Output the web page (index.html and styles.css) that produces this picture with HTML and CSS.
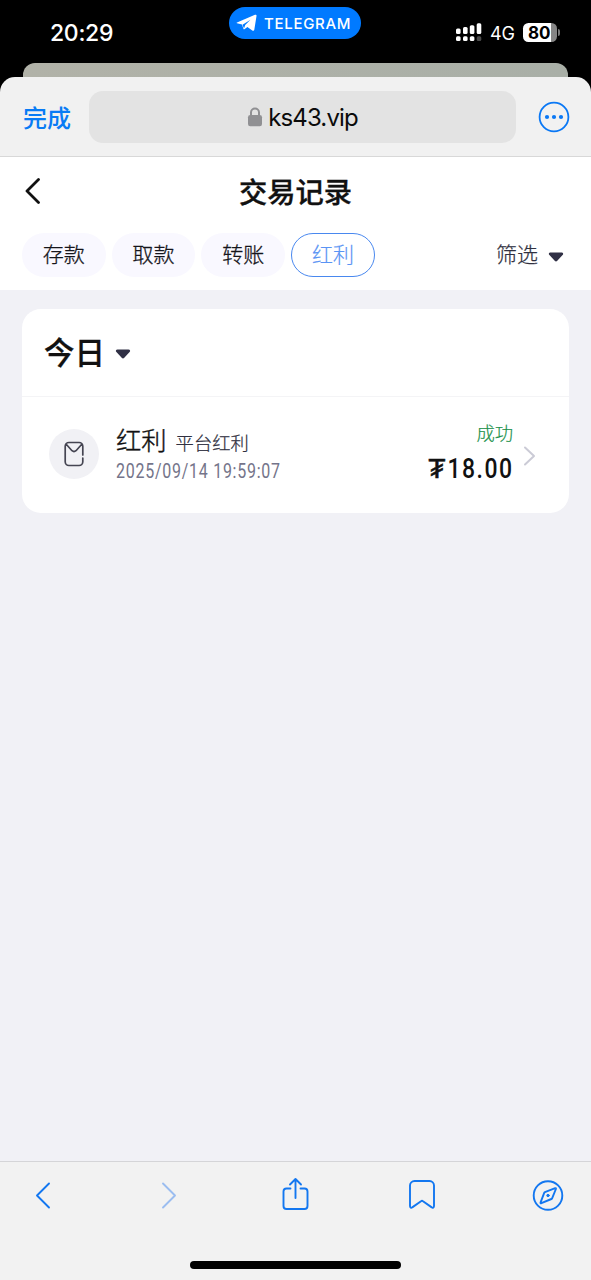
FILE: index.html
```html
<!DOCTYPE html>
<html lang="zh-CN">
<head>
<meta charset="utf-8">
<meta name="viewport" content="width=device-width, initial-scale=1">
<title>交易记录</title>
<link rel="stylesheet" href="styles.css">
</head>
<body>
<div class="screen">
  <header class="status">
    <div class="status-time">20:29</div>
    <div class="status-app">
      <svg width="22" height="18" viewBox="0 0 22 18"><path d="M1 8.400 19 .8c1-.4 1.700.2 1.500 1.300L18.300 15.700c-.2 1.200-1 1.500-2 .8L11.400 13l-3 2.200c-.5.3-.8.100-1-.4L6 10.400 1 9.300c-.6-.2-.6-.7 0-.9Z" fill="#fff"/><path d="M6.500 10.700 14.500 5.800 9.200 10.900 8 14.500Z" fill="#007aff"/></svg>
      <span>TELEGRAM</span>
    </div>
    <div class="status-right">
      <svg width="26" height="20" viewBox="0 0 26 20" fill="#fff"><rect x="0" y="5.500" width="4.600" height="5.600" rx="1.500"/><rect x="7" y="4" width="4.600" height="7.100" rx="1.500"/><rect x="13.800" y="2.200" width="4.600" height="8.900" rx="1.500"/><rect x="20.700" y=".3" width="4.600" height="10.800" rx="1.500"/><rect x="0" y="13.300" width="4.600" height="4.800" rx="1.500"/><rect x="7" y="13.300" width="4.600" height="4.800" rx="1.500"/><rect x="13.800" y="13.300" width="4.600" height="4.800" rx="1.500"/><rect x="20.700" y="13.300" width="4.600" height="4.800" rx="1.500" fill="#4c4c4c"/></svg>
      <span class="network">4G</span>
      <div class="battery"><span>80</span></div>
      <i class="battery-cap"></i>
    </div>
  </header>
  <div class="backdrop"><div class="peek"></div></div>
  <main class="sheet">
    <div class="browser-bar">
      <span class="done">完成</span>
      <div class="address">
        <svg width="16" height="20" viewBox="0 0 16 20"><path d="M4 9V5.500a4 4 0 0 1 8 0V9" fill="none" stroke="#909093" stroke-width="2"/><rect x="1" y="8" width="14" height="11.200" rx="2.300" fill="#909093"/></svg>
        <span>ks43.vip</span>
      </div>
      <svg width="32" height="32" viewBox="0 0 32 32"><circle cx="16" cy="16" r="14.400" fill="none" stroke="#0a78f5" stroke-width="1.800"/><g fill="#0a78f5"><circle cx="9" cy="16" r="2.100"/><circle cx="16" cy="16" r="2.100"/><circle cx="23" cy="16" r="2.100"/></g></svg>
    </div>
    <section class="page-head">
      <div class="title-row">
        <svg width="16" height="26" viewBox="0 0 16 26"><path d="M13.500 1.500 2 13l11.500 11.500" fill="none" stroke="#111" stroke-width="2.800" stroke-linecap="round" stroke-linejoin="round"/></svg>
        <h1>交易记录</h1>
      </div>
      <div class="tabs">
        <span class="tab">存款</span>
        <span class="tab">取款</span>
        <span class="tab">转账</span>
        <span class="tab active">红利</span>
        <div class="filter"><span>筛选</span><svg class="caret" width="16" height="11" viewBox="0 0 16 11"><path d="M2.500.5h11c1.600 0 2.200 1.500 1.100 2.600L9.300 8.800a1.800 1.800 0 0 1-2.600 0L1.400 3.100C.3 2 .9.5 2.500.5Z" fill="#303045"/></svg></div>
      </div>
    </section>
    <section class="content">
      <article class="card">
        <div class="card-head"><h2>今日</h2><svg class="caret" width="16" height="11" viewBox="0 0 16 11"><path d="M2.500.5h11c1.600 0 2.200 1.500 1.100 2.600L9.300 8.800a1.800 1.800 0 0 1-2.600 0L1.400 3.100C.3 2 .9.5 2.500.5Z" fill="#303045"/></svg></div>
        <div class="record">
          <div class="record-icon"><svg width="20" height="26" viewBox="0 0 20 26"><path d="M18.800 14V5.200A3.700 3.700 0 0 0 15.100 1.500H4.900A3.700 3.700 0 0 0 1.200 5.200v15.600a3.700 3.700 0 0 0 3.700 3.700h10.200a3.700 3.700 0 0 0 3.700-3.700V17M2 3l6 6.700q2 1.600 4 0L18 3" fill="none" stroke="#454552" stroke-width="1.700" stroke-linecap="round" stroke-linejoin="round"/></svg></div>
          <div class="record-info">
            <div class="record-name"><span class="kind">红利</span><span class="source">平台红利</span></div>
            <div class="date"><span>2025/09/14 19:59:07</span></div>
          </div>
          <div class="record-result">
            <div class="state">成功</div>
            <div class="amount"><span class="currency">₮</span><span class="value">18.00</span></div>
          </div>
          <svg class="more" width="13" height="20" viewBox="0 0 13 20"><path d="m2 1.500 9 8.500-9 8.500" fill="none" stroke="#cbcbd6" stroke-width="2" stroke-linecap="round" stroke-linejoin="round"/></svg>
        </div>
      </article>
    </section>
    <footer class="toolbar">
      <nav class="tools">
        <svg width="32" height="36" viewBox="0 0 32 36"><path d="M22 6.500 10 18.500l12 12"/></svg>
        <svg class="disabled" width="32" height="36" viewBox="0 0 32 36"><path d="m10 6.500 12 12-12 12"/></svg>
        <svg width="32" height="36" viewBox="0 0 32 36"><path d="M10.500 11.500H6.500a3 3 0 0 0-3 3V29a3 3 0 0 0 3 3h18a3 3 0 0 0 3-3V14.500a3 3 0 0 0-3-3h-4M15.500 21V2.500M10 7.500 15.500 2 21 7.500"/></svg>
        <svg width="32" height="36" viewBox="0 0 32 36"><path d="M8.500 4h15a4.500 4.500 0 0 1 4.500 4.500V29c0 1.700-1.200 2.300-2.600 1.100L17 24.200q-1-.8-2 0l-8.400 5.900C5.200 31.300 4 30.700 4 29V8.500A4.500 4.500 0 0 1 8.500 4Z"/></svg>
        <svg width="32" height="36" viewBox="0 0 32 36"><circle cx="16" cy="18.500" r="14.300"/><path d="M23.200 11.200 12.900 15.200a1.200 1.200 0 0 0-.7.7L8.600 25.400c-.3.800.1 1.100.8.800l10-4.200a1.200 1.200 0 0 0 .7-.7L23.900 12c.2-.7-.1-1-.7-.8Z"/><circle cx="16" cy="18.500" r="1.200" fill="#1377f0" stroke-width="1"/></svg>
      </nav>
      <div class="home"></div>
    </footer>
  </main>
</div>
</body>
</html>
```

FILE: styles.css
```css
* { box-sizing: border-box; }
body { margin: 0; background: #000; font-family: Inter, "Noto Sans CJK SC", sans-serif; }
h1, h2 { margin: 0; }
svg { display: block; flex: none; }
.screen { width: 591px; height: 1280px; display: flex; flex-direction: column; overflow: hidden; background: #000; }
.status { height: 63px; padding: 0 31px 0 50px; display: grid; grid-template-columns: 179px 132px 1fr; color: #fff; }
.status-time { font-size: 23px; font-weight: 500; line-height: 66px; letter-spacing: -.3px; }
.status-app { height: 32px; margin-top: 7px; border-radius: 16px; background: #007aff; display: flex; align-items: center; gap: 6px; padding-left: 7px; font-size: 15px; font-weight: 500; letter-spacing: .7px; }
.status-right { height: 65px; display: flex; align-items: center; padding-left: 95px; }
.network { font-size: 18px; width: 26px; margin: 1px 7px 0 8px; letter-spacing: -.2px; }
.battery { width: 34px; height: 19px; border-radius: 5.500px; background: linear-gradient(90deg, #fff 28px, #858585 28px); color: #000; font-size: 17px; font-weight: 700; line-height: 20px; padding-left: 5px; }
.battery-cap { width: 2px; height: 7px; margin-left: 1px; border-radius: 0 3px 3px 0; background: #777; }
.backdrop { height: 14px; padding: 0 23px; flex: none; }
.peek { height: 14px; border-radius: 12px 12px 0 0; background: linear-gradient(90deg, #b1b2a8, #a9afa7); }
.sheet { flex: 1; min-height: 0; display: flex; flex-direction: column; background: #f1f1f1; border-radius: 15px 15px 0 0; overflow: hidden; }
.browser-bar { height: 80px; flex: none; border-bottom: 1px solid #d8d8d8; display: flex; align-items: center; padding: 1px 21px 0 23px; }
.done { width: 66px; font-size: 24px; font-weight: 500; line-height: 36px; margin-top: 3px; color: #087bf5; }
.address { width: 427px; height: 52px; margin-right: 22px; border-radius: 14px; background: #e3e3e3; display: flex; align-items: center; justify-content: center; gap: 5px; font-size: 24px; letter-spacing: -.85px; color: #0b0b0b; }
.page-head { height: 133px; flex: none; background: #fff; }
.title-row { height: 68px; display: grid; grid-template-columns: 60px 1fr 60px; align-items: center; }
.title-row svg { margin-left: 25px; }
h1 { text-align: center; font-size: 28.300px; line-height: 40px; font-weight: 500; -webkit-text-stroke: .35px #111; color: #111; padding-top: 3px; }
.tabs { display: flex; align-items: center; gap: 6px; padding: 8px 27px 0 22px; font-weight: 300; }
.tab { width: 83.700px; height: 44px; border-radius: 22px; background: #f9f8ff; text-align: center; line-height: 44px; font-size: 21px; color: #15151b; -webkit-text-stroke: .3px; }
.tab.active { border: 1.500px solid #4988ef; background: #fff; color: #5a94f4; line-height: 42px; -webkit-text-stroke: .2px; }
.filter { margin-left: auto; display: flex; align-items: center; gap: 10px; font-size: 21px; line-height: 46px; height: 44px; color: #303040; -webkit-text-stroke: .25px; }
.filter .caret { margin-top: 4px; }
.content { flex: 1; background: #f1f1f6; padding: 19px 22px; }
.card { height: 204px; border-radius: 19px; background: #fff; }
.card-head { height: 88px; border-bottom: 1px solid #f4f4f6; display: flex; align-items: center; gap: 10px; padding-left: 22px; }
.card-head .caret { margin-top: 3px; }
h2 { font-size: 30.500px; font-weight: 500; -webkit-text-stroke: .3px #111; line-height: 86px; color: #111; }
.record { height: 116px; display: flex; align-items: center; padding: 0 33px 0 27px; }
.record-icon { width: 50px; height: 50px; border-radius: 50%; background: #f1f1f5; display: grid; place-items: center; margin: -2px 17px 0 0; }
.record-info { flex: 1; }
.record-name { display: flex; align-items: baseline; gap: 9px; line-height: 35px; font-weight: 300; }
.kind { font-size: 25.300px; color: #111; -webkit-text-stroke: .4px; }
.source { font-size: 18.300px; color: #303040; -webkit-text-stroke: .25px; }
.date { height: 26px; line-height: 22px; color: #74748a; font-family: Roboto, sans-serif; font-size: 19.500px; white-space: nowrap; }
.date span { display: inline-block; transform: scaleX(.82); transform-origin: left; letter-spacing: .900px; }
.record-result { text-align: right; margin: 0 10px 0 0; }
.state { font-size: 18.300px; font-weight: 300; line-height: 28px; color: #1b914b; -webkit-text-stroke: .2px; }
.amount { display: flex; justify-content: flex-end; font: 500 27px/45px Roboto, sans-serif; color: #111; }
.currency, .value { display: inline-block; transform-origin: right; }
.currency { transform: scaleX(1.050); -webkit-text-stroke: .5px; }
.value { transform: scaleX(.85); letter-spacing: 1.700px; margin: 0 -.5px 0 -9.500px; }
.more { margin-top: 1px; }
.toolbar { height: 119px; flex: none; border-top: 1px solid #d5d5d8; background: #f2f2f2; padding: 15px 27px 0; }
.tools { display: flex; justify-content: space-between; }
.tools svg { fill: none; stroke: #1377f0; stroke-width: 1.900; stroke-linecap: round; stroke-linejoin: round; }
.tools .disabled { stroke: #9bbdf0; }
.home { width: 211px; height: 8px; margin: 48px auto 0; border-radius: 4px; background: #000; }
```
